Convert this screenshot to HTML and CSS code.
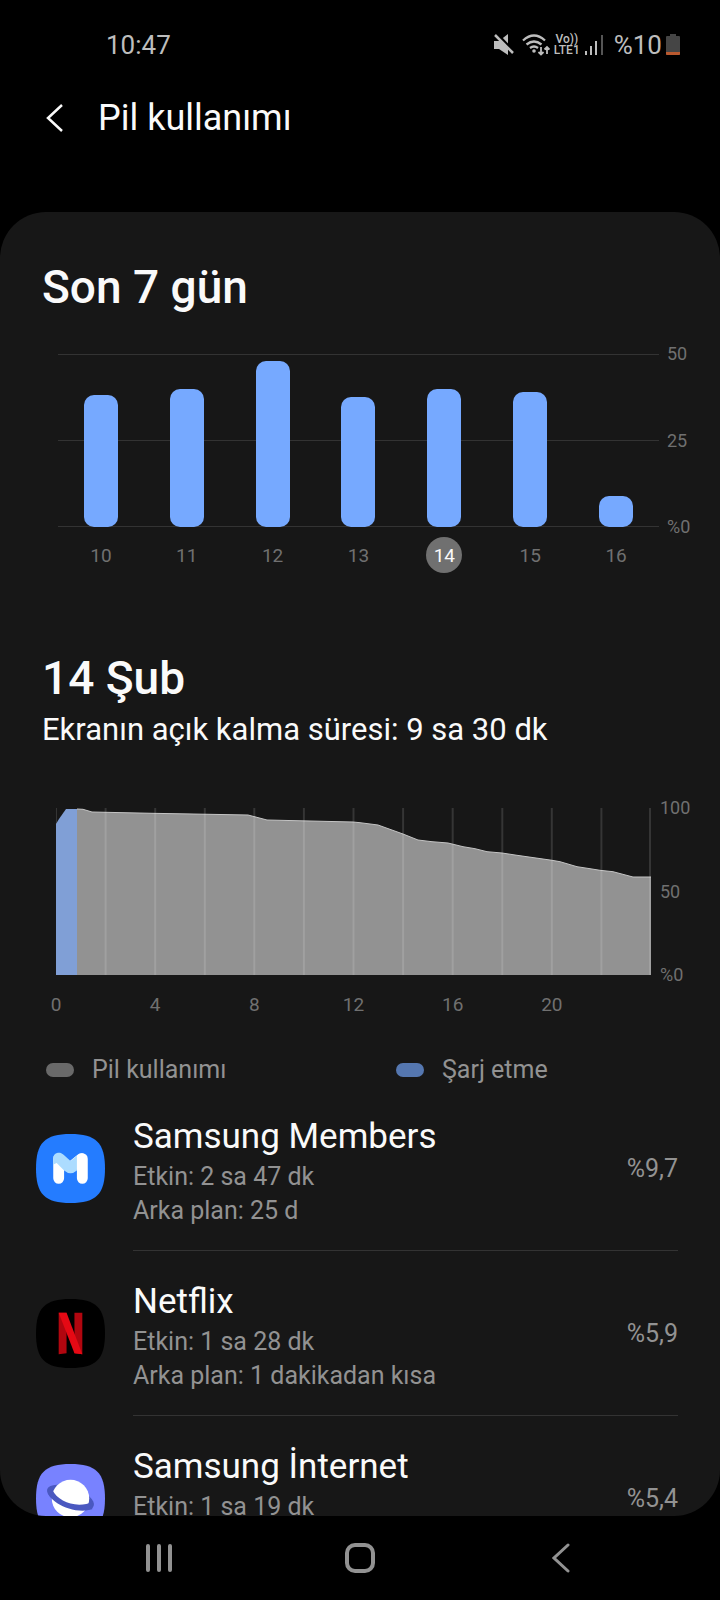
FILE: index.html
```html
<!DOCTYPE html>
<html lang="tr">
<head>
  <meta charset="UTF-8">
  <meta name="viewport" content="width=device-width, initial-scale=1.0">
  <title>Pil kullanımı</title>
  <link rel="stylesheet" href="styles.css">
</head>
<body>
  <div class="status-bar">
    <span class="clock">10:47</span>
    <div class="status-icons">
      <svg class="icon-mute" width="20" height="22" viewBox="0 0 20 22">
        <path d="M0 7h5l9-7v21l-9-6H0z" fill="#bdbdbd"/>
        <path d="M2 -1l18 19" stroke="#000" stroke-width="3"/>
        <path d="M1 1l18 18" stroke="#bdbdbd" stroke-width="2.500"/>
      </svg>
      <svg class="icon-wifi" width="28" height="22" viewBox="0 0 28 22" fill="none" stroke="#bdbdbd" stroke-width="2.300">
        <path d="M1 6.500q11-10 22 0M4.500 10.500q7.500-6 15 0M8 14q4-3 8 0"/>
        <circle cx="12" cy="17" r="1.800" fill="#bdbdbd" stroke="none"/>
        <path d="M19 13v8M16.500 18l2.500 2.500 2.500-2.500M25 20v-7M22.500 15.500l2.500-2.500 2.500 2.500" stroke-width="1.800"/>
      </svg>
      <div class="volte"><span>Vo))</span><span>LTE1</span></div>
      <svg class="icon-signal" width="20" height="22" viewBox="0 0 20 22">
        <path d="M1 17h2v4H1zM6 12h2v9H6zM11 7h2v14h-2z" fill="#bdbdbd"/>
        <path d="M17 1h2v20h-2z" fill="#555"/>
      </svg>
      <span class="battery-text">%10</span>
      <svg class="icon-battery" width="14" height="22" viewBox="0 0 14 22">
        <path d="M4 0h6v2h3q1 0 1 1v17q0 1-1 1H1q-1 0-1-1V3q0-1 1-1h3z" fill="#454545"/>
        <path d="M0 18h14v2q0 1-1 1H1q-1 0-1-1z" fill="#b9592f"/>
      </svg>
    </div>
  </div>

  <header class="header">
    <a class="back" href="#" aria-label="Geri">
      <svg width="18" height="30" viewBox="0 0 18 30" fill="none" stroke="#fafafa" stroke-width="2.500">
        <path d="M16 2L2 15l14 13"/>
      </svg>
    </a>
    <h1>Pil kullanımı</h1>
  </header>

  <main class="card">
    <section class="week">
      <h2>Son 7 gün</h2>
      <div class="week-chart">
        <div class="week-plot">
          <div class="bar" style="height: 77%"></div>
          <div class="bar" style="height: 81%"></div>
          <div class="bar" style="height: 97%"></div>
          <div class="bar" style="height: 76%"></div>
          <div class="bar" style="height: 81%"></div>
          <div class="bar" style="height: 79%"></div>
          <div class="bar" style="height: 18%"></div>
        </div>
        <div class="axis"><span>50</span><span>25</span><span>%0</span></div>
        <div class="week-days">
          <button>10</button>
          <button>11</button>
          <button>12</button>
          <button>13</button>
          <button class="selected">14</button>
          <button>15</button>
          <button>16</button>
        </div>
      </div>
    </section>

    <section class="day">
      <h2>14 Şub</h2>
      <p>Ekranın açık kalma süresi: 9 sa 30 dk</p>
      <div class="day-chart">
        <svg class="day-plot" viewBox="0 0 595 167" preserveAspectRatio="none">
          <path fill="#929292" d="M21 167V1L27 1.300 36 4 96 5.300 153 6.300 192 7 211 12 297 14 304 14.700 322 17 347 26 362 32 376 33.700 392 35 407 38.700 419 40.700 431 43.700 446 45 461 47.300 496 52.300 504 53.700 521 58.700 534 60.700 544 62.300 557 63.700 577 69H595V167z"/>
          <path fill="none" stroke="#c4c4c4" d="M21 1L27 1.300 36 4 96 5.300 153 6.300 192 7 211 12 297 14 304 14.700 322 17 347 26 362 32 376 33.700 392 35 407 38.700 419 40.700 431 43.700 446 45 461 47.300 496 52.300 504 53.700 521 58.700 534 60.700 544 62.300 557 63.700 577 69H595"/>
          <path fill="#809fd6" d="M0 167V16L3 11 10 1H21V167z"/>
          <path fill="none" stroke="#fff" stroke-opacity=".13" stroke-width="2" d="M0 0V16M49.600 0V167M99.200 0V167M148.800 0V167M198.300 0V167M247.900 0V167M297.500 0V167M347.100 0V167M396.700 0V167M446.300 0V167M495.800 0V167M545.400 0V167M594 0V167"/>
        </svg>
        <div class="axis"><span>100</span><span>50</span><span>%0</span></div>
        <div class="hours">
          <span>0</span><span>4</span><span>8</span><span>12</span><span>16</span><span>20</span>
        </div>
      </div>
      <div class="legend">
        <span><i class="swatch usage"></i>Pil kullanımı</span>
        <span><i class="swatch charge"></i>Şarj etme</span>
      </div>
    </section>

    <ul class="apps">
      <li>
        <svg class="app-icon" width="69" height="69" viewBox="0 0 70 70">
          <path d="M35 0C61 0 70 9 70 35S61 70 35 70 0 61 0 35 9 0 35 0z" fill="#247cff"/>
          <path d="M23 25v20M47 25v20" stroke="#fff" stroke-width="11" stroke-linecap="round"/>
          <path d="M35 34L46 25" stroke="#fff" stroke-width="11" stroke-linecap="round"/>
          <path d="M17.500 31V24.500C17.500 19 24 17 28 21L35 27.500 41.500 22V37Q35 42.500 28.500 37L21 29.500z" fill="#acdcff"/>
        </svg>
        <div class="app-row">
          <div class="app-text">
            <h3>Samsung Members</h3>
            <p>Etkin: 2 sa 47 dk</p>
            <p>Arka plan: 25 d</p>
          </div>
          <span class="percent">%9,7</span>
        </div>
      </li>
      <li>
        <svg class="app-icon" width="69" height="69" viewBox="0 0 70 70">
          <path d="M35 0C61 0 70 9 70 35S61 70 35 70 0 61 0 35 9 0 35 0z" fill="#000"/>
          <path d="M23 14h8v41l-8 1zM39 14h8v42l-8-1z" fill="#b1060f"/>
          <path d="M23 14h8l16 42-8-1z" fill="#e50914"/>
        </svg>
        <div class="app-row">
          <div class="app-text">
            <h3>Netflix</h3>
            <p>Etkin: 1 sa 28 dk</p>
            <p>Arka plan: 1 dakikadan kısa</p>
          </div>
          <span class="percent">%5,9</span>
        </div>
      </li>
      <li>
        <svg class="app-icon" width="69" height="69" viewBox="0 0 70 70">
          <path d="M35 0C61 0 70 9 70 35S61 70 35 70 0 61 0 35 9 0 35 0z" fill="#7882ff"/>
          <ellipse cx="35" cy="34" rx="25" ry="10.500" transform="rotate(20 35 34)" fill="#4a58c0"/>
          <circle cx="35" cy="35" r="19" fill="#fff"/>
          <path d="M12 25C9 36 36 52 57 46L58 38C42 46 22 38 17 27z" fill="#4a58c0"/>
        </svg>
        <div class="app-row">
          <div class="app-text">
            <h3>Samsung İnternet</h3>
            <p>Etkin: 1 sa 19 dk</p>
          </div>
          <span class="percent">%5,4</span>
        </div>
      </li>
    </ul>
  </main>

  <nav class="nav-bar">
    <button aria-label="Son uygulamalar">
      <svg width="28" height="28" viewBox="0 0 28 28" stroke="#929292" stroke-width="4" stroke-linecap="round">
        <path d="M3 2v24M14 2v24M25 2v24"/>
      </svg>
    </button>
    <button aria-label="Ana ekran">
      <svg width="32" height="32" viewBox="0 0 32 32" fill="none" stroke="#929292" stroke-width="4">
        <rect x="3" y="3" width="26" height="26" rx="8"/>
      </svg>
    </button>
    <button aria-label="Geri">
      <svg width="18" height="30" viewBox="0 0 18 30" fill="none" stroke="#929292" stroke-width="3" stroke-linecap="round">
        <path d="M16 2L2 15l14 13"/>
      </svg>
    </button>
  </nav>
</body>
</html>
```
FILE: styles.css
```css
* {
  box-sizing: border-box;
}

body {
  margin: 0;
  height: 100vh;
  display: flex;
  flex-direction: column;
  background: #000;
  color: #fafafa;
  font-family: Roboto, sans-serif;
  overflow: hidden;
}

h1, h2, h3, p, ul {
  margin: 0;
  padding: 0;
}

svg {
  display: block;
  flex-shrink: 0;
}

button {
  padding: 0;
  border: none;
  background: none;
  color: inherit;
  font-family: inherit;
  cursor: pointer;
}

/* status bar */
.status-bar {
  height: 90px;
  flex-shrink: 0;
  padding: 0 40px 0 106px;
  display: flex;
  justify-content: space-between;
  align-items: center;
  font-size: 26px;
  color: #bdbdbd;
}

.status-icons {
  display: flex;
  align-items: center;
  gap: 4px;
}

.icon-mute {
  margin-right: 4px;
}

.battery-text {
  margin-left: 6px;
}

.volte {
  display: flex;
  flex-direction: column;
  align-items: center;
  font-size: 12px;
  line-height: 11px;
  font-weight: 500;
}

/* header */
.header {
  height: 122px;
  flex-shrink: 0;
  padding: 0 46px 66px;
  display: flex;
  align-items: center;
  gap: 34px;
}

.header h1 {
  font-size: 36px;
  font-weight: 400;
}

/* card */
.card {
  flex: 1;
  min-height: 0;
  padding-top: 48px;
  border-radius: 46px;
  background: #171717;
  overflow: hidden;
}

.card h2 {
  padding: 0 42px;
  font-size: 46px;
  line-height: 54px;
  font-weight: 500;
}

.axis {
  display: flex;
  flex-direction: column;
  justify-content: space-between;
  margin: -10px 0;
  font-size: 18px;
  line-height: 20px;
  color: #707070;
}

/* last 7 days */
.week-chart {
  display: grid;
  grid-template-columns: 1fr 53px;
  column-gap: 8px;
  padding: 40px 0 0 58px;
}

.week-plot {
  height: 173px;
  display: grid;
  grid-template-columns: repeat(7, 1fr);
  align-items: end;
  justify-items: center;
  border-top: 1px solid #333;
  border-bottom: 1px solid #333;
  background: linear-gradient(#333, #333) center / 100% 1px no-repeat;
}

.bar {
  width: 34px;
  margin-bottom: -1px;
  border-radius: 10px;
  background: #76a9ff;
}

.week-days {
  display: grid;
  grid-template-columns: repeat(7, 1fr);
  justify-items: center;
  padding-top: 10px;
}

.week-days button {
  width: 36px;
  height: 36px;
  border-radius: 50%;
  font-size: 19px;
  color: #707070;
}

.week-days .selected {
  background: #707070;
  color: #fafafa;
}

/* selected day */
.day {
  padding-top: 78px;
}

.day > p {
  padding: 7px 42px 0;
  font-size: 31px;
  line-height: 36px;
}

.day-chart {
  display: grid;
  grid-template-columns: 1fr 60px;
  column-gap: 9px;
  padding: 60px 0 0 56px;
}

.day-plot {
  width: 100%;
  height: 167px;
}

.hours {
  display: grid;
  grid-template-columns: repeat(6, 1fr);
  padding-top: 18px;
  font-size: 19px;
  line-height: 24px;
  color: #707070;
}

/* each label is centred on the left edge of its column */
.hours span {
  width: 40px;
  margin-left: -20px;
  text-align: center;
}

.legend {
  display: grid;
  grid-template-columns: 350px 1fr;
  padding: 37px 46px 0;
  font-size: 25px;
  line-height: 32px;
  color: #929292;
}

.legend span {
  display: flex;
  align-items: center;
  gap: 18px;
}

.swatch {
  width: 28px;
  height: 14px;
  border-radius: 7px;
}

.usage {
  background: #696969;
}

.charge {
  background: #5577b0;
}

/* app list */
.apps {
  list-style: none;
}

.apps li {
  display: flex;
  align-items: center;
  gap: 28px;
  padding: 0 42px 0 36px;
}

.app-row {
  flex: 1;
  height: 165px;
  display: flex;
  align-items: center;
  justify-content: space-between;
  border-bottom: 1px solid #333;
}

.app-text {
  min-height: 120px;
  padding-top: 6px;
}

.app-text h3 {
  font-size: 35px;
  line-height: 46px;
  font-weight: 400;
}

.app-text p {
  font-size: 25px;
  line-height: 34px;
  color: #929292;
}

.percent {
  font-size: 25px;
  color: #929292;
}

/* navigation bar */
.nav-bar {
  height: 84px;
  flex-shrink: 0;
  padding: 0 58px;
  display: grid;
  grid-template-columns: repeat(3, 1fr);
}

.nav-bar button {
  display: flex;
  align-items: center;
  justify-content: center;
}
```
